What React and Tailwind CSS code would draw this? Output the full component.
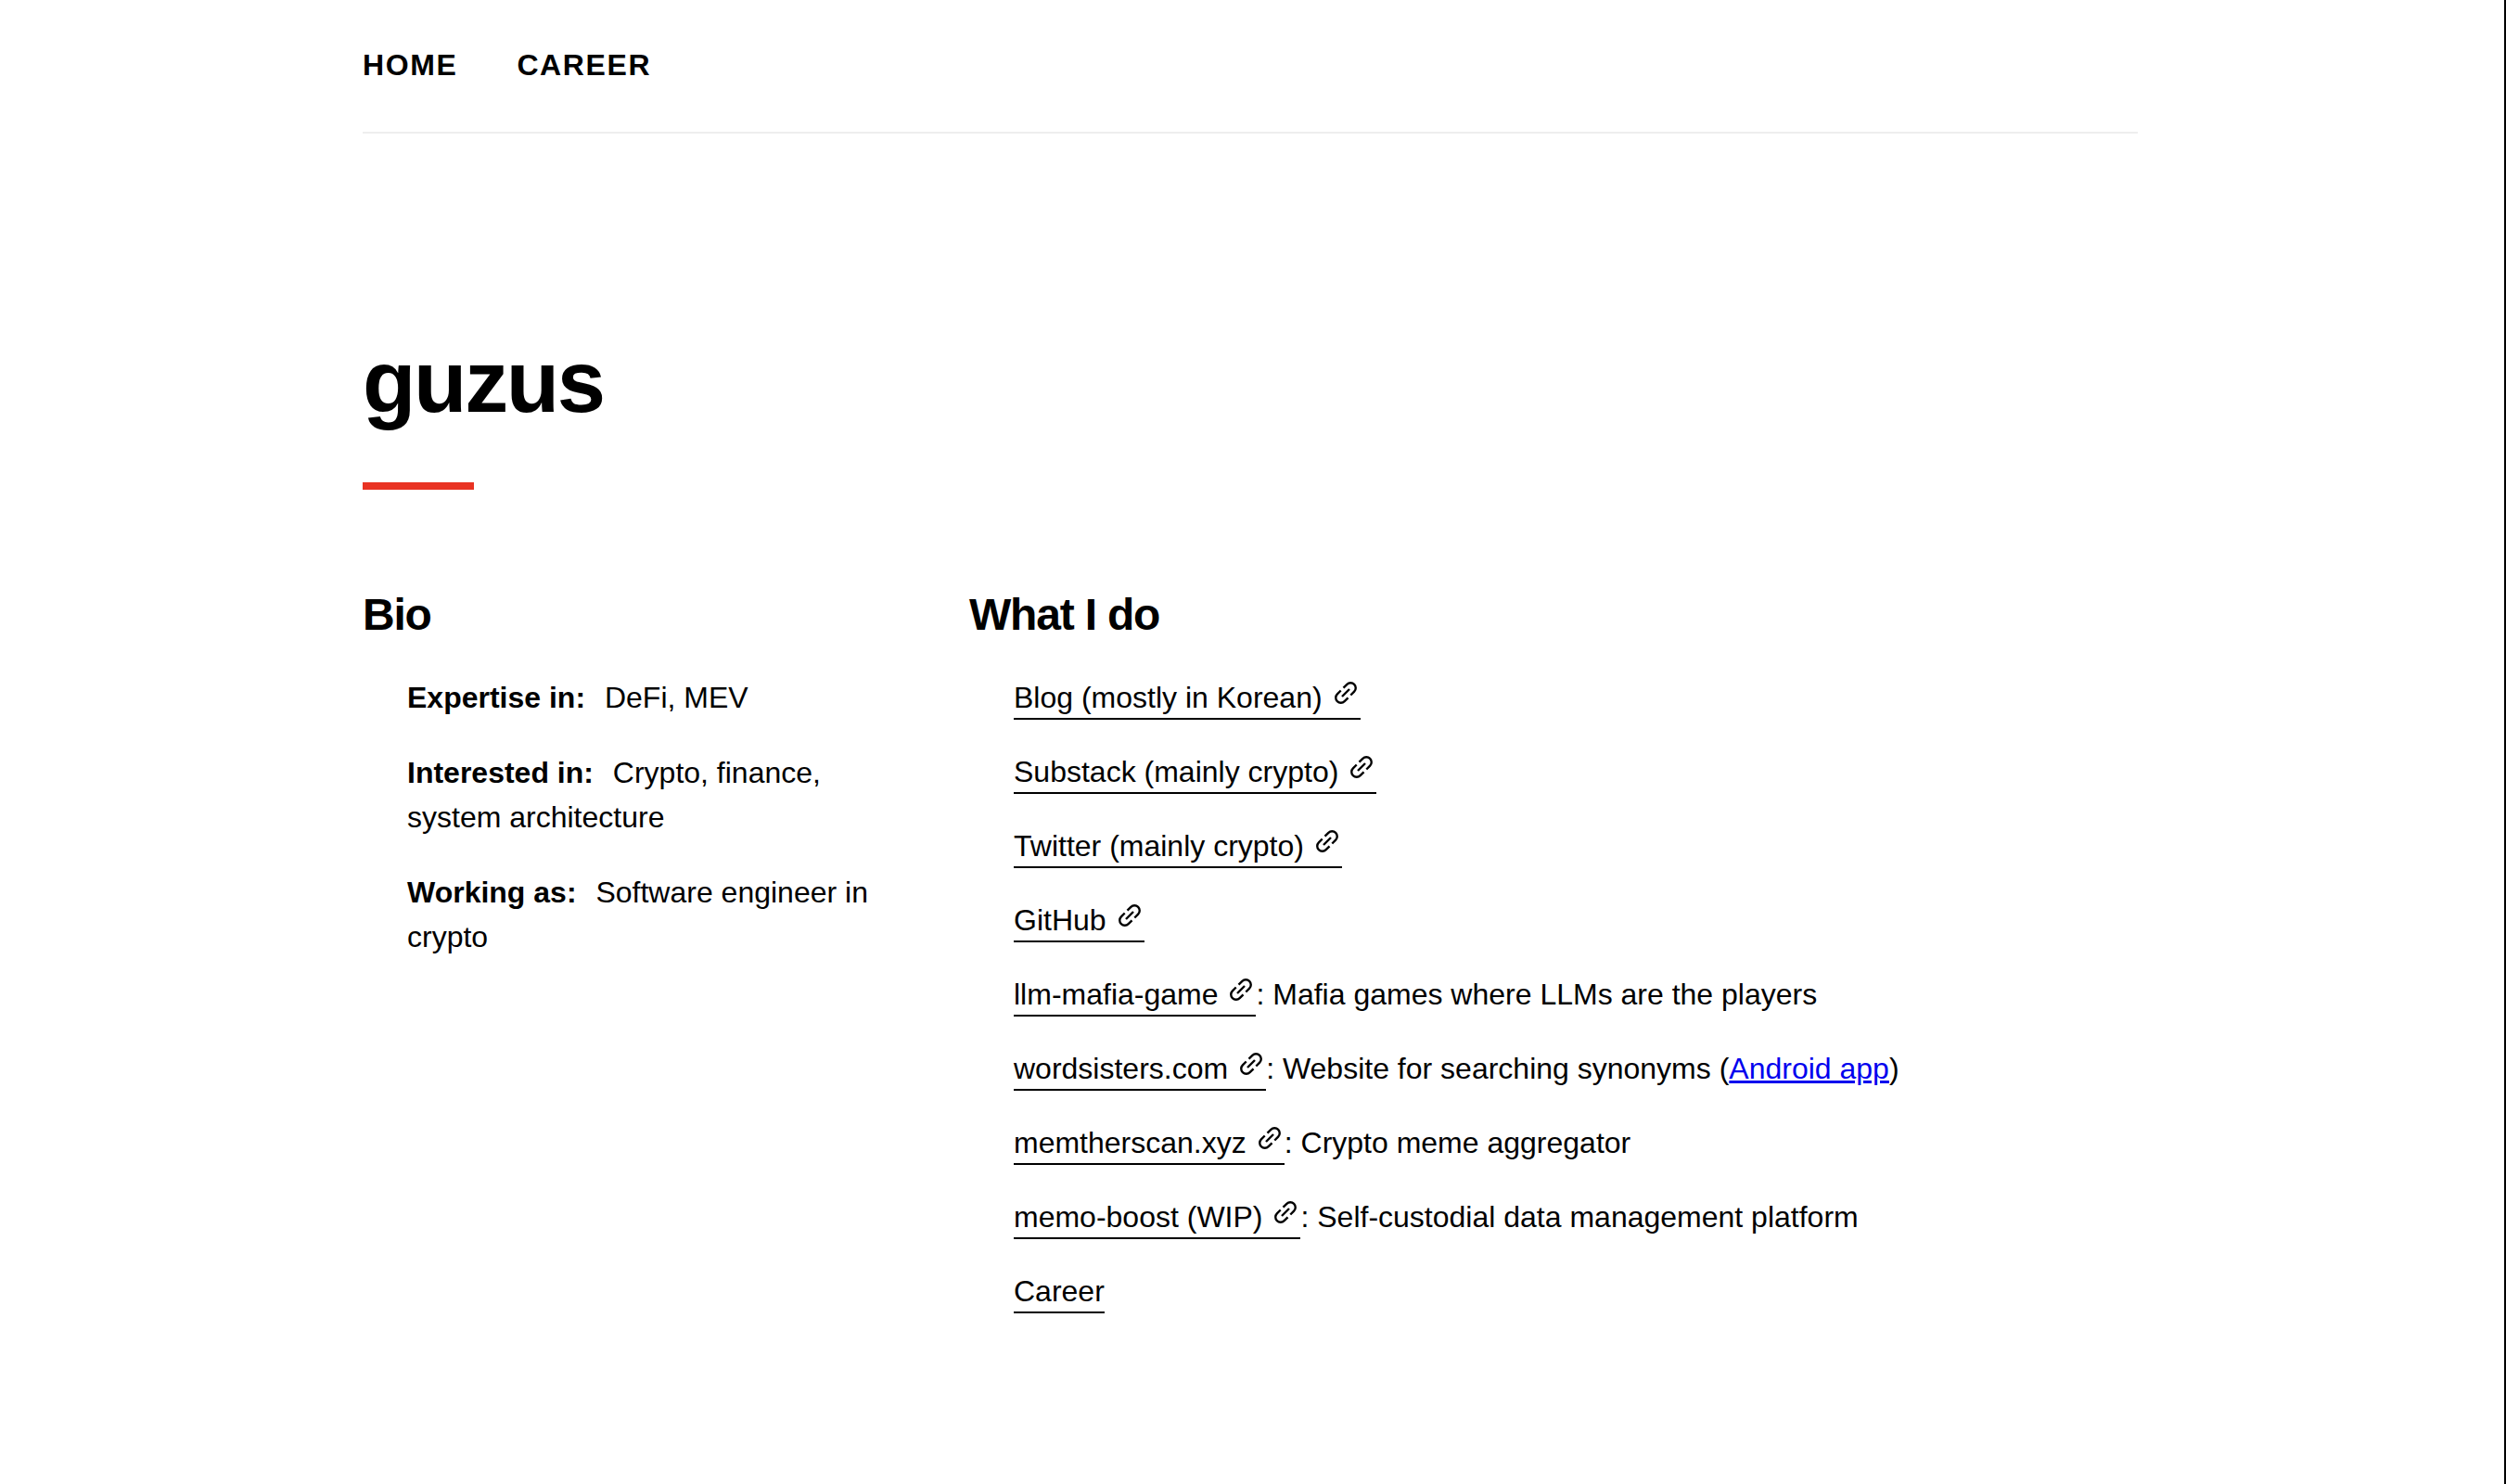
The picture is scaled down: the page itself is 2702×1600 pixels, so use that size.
const links = [
  { label: "Blog (mostly in Korean)" },
  { label: "Substack (mainly crypto)" },
  { label: "Twitter (mainly crypto)" },
  { label: "GitHub" },
  { label: "llm-mafia-game", note: ": Mafia games where LLMs are the players" },
  {
    label: "wordsisters.com",
    note: (
      <>
        : Website for searching synonyms (
        <a href="#android" className="text-[#0000ee] underline">
          Android app
        </a>
        )
      </>
    ),
  },
  { label: "memtherscan.xyz", note: ": Crypto meme aggregator" },
  { label: "memo-boost (WIP)", note: ": Self-custodial data management platform" },
  { label: "Career", internal: true },
];

const bio = [
  { term: "Expertise in:", text: "DeFi, MEV" },
  { term: "Interested in:", text: "Crypto, finance, system architecture" },
  { term: "Working as:", text: "Software engineer in crypto" },
];

function LinkIcon() {
  return (
    <svg
      viewBox="0 0 32 32"
      className="ml-[9px] inline-block size-8 align-baseline"
      fill="none"
      stroke="currentColor"
      strokeWidth="2.4"
      aria-hidden="true"
    >
      <path d="M12 20l8-8" />
      <path d="M13.500 10.700L17.360 6.860A5.500 5.500 0 0 1 25.140 14.640L21.300 18.500" />
      <path d="M18.500 21.300L14.640 25.140A5.500 5.500 0 0 1 6.860 17.360L10.700 13.500" />
    </svg>
  );
}

function Heading({ children }) {
  return <h2 className="text-5xl leading-[58px] font-bold tracking-tight">{children}</h2>;
}

export default function App() {
  return (
    <div className="min-h-screen border-r-2 border-black bg-white pr-1 font-['Liberation_Sans',Arial,sans-serif] text-[32px] leading-[48px] text-black">
      <div className="mx-auto max-w-[1914px]">
        <header className="border-b-2 border-[#eeeeee] pt-[46px] pb-12">
          <nav className="flex gap-16 font-bold tracking-wider uppercase">
            <a href="#home">Home</a>
            <a href="#career">Career</a>
          </nav>
        </header>
        <main className="pt-[216px]">
          <h1 className="text-[94px] leading-[104px] font-bold tracking-tight">guzus</h1>
          <div className="mt-14 h-2 w-[120px] bg-[#e93323]" />
          <div className="mt-[106px] flex gap-24">
            <section className="w-[558px] shrink-0">
              <Heading>Bio</Heading>
              <ul className="mt-9 flex flex-col gap-[33px] pl-12">
                {bio.map((item) => (
                  <li key={item.term}>
                    <strong className="mr-3">{item.term}</strong> {item.text}
                  </li>
                ))}
              </ul>
            </section>
            <section className="min-w-0 flex-1">
              <Heading>What I do</Heading>
              <ul className="mt-9 flex flex-col gap-8 pl-12">
                {links.map((item) => (
                  <li key={item.label}>
                    <a href="#link" className="border-b-2 border-black pb-1">
                      {item.label}
                      {!item.internal && <LinkIcon />}
                    </a>
                    {item.note}
                  </li>
                ))}
              </ul>
            </section>
          </div>
        </main>
      </div>
    </div>
  );
}
